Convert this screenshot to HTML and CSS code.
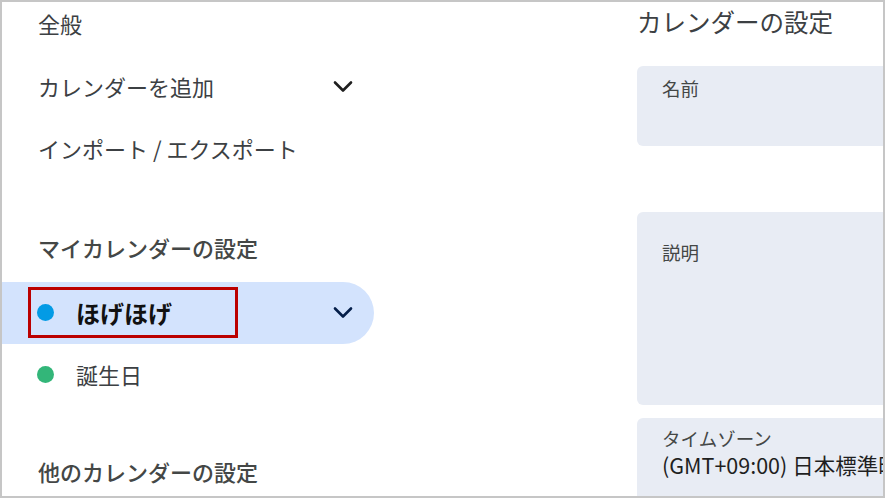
FILE: index.html
```html
<!DOCTYPE html>
<html lang="ja">

<head>
    <meta charset="UTF-8">
    <meta name="viewport" content="width=device-width, initial-scale=1.0">
    <title>設定</title>
    <link rel="stylesheet" href="styles.css">
</head>

<body>
    <div class="frame">
        <nav class="side-nav">
            <div class="nav-item nav-top">全般</div>
            <div class="nav-item nav-first">
                <span>カレンダーを追加</span>
                <svg class="chevron" viewBox="0 0 24 24"><path d="M4 8.5l8 8 8-8" /></svg>
            </div>
            <div class="nav-item">インポート / エクスポート</div>

            <div class="nav-item nav-heading">マイカレンダーの設定</div>
            <div class="nav-item cal-row cal-active">
                <span class="dot dot-blue"></span>
                <span class="cal-name">ほげほげ</span>
                <svg class="chevron" viewBox="0 0 24 24"><path d="M4 8.5l8 8 8-8" /></svg>
                <div class="mark-box"></div>
            </div>
            <div class="nav-item cal-row">
                <span class="dot dot-green"></span>
                <span class="cal-name">誕生日</span>
            </div>

            <div class="nav-item nav-heading nav-heading-2">他のカレンダーの設定</div>
        </nav>

        <main class="panel">
            <h2 class="panel-title">カレンダーの設定</h2>
            <div class="field field-name">
                <div class="field-label">名前</div>
            </div>
            <div class="field field-desc">
                <div class="field-label">説明</div>
            </div>
            <div class="field field-tz">
                <div class="field-label">タイムゾーン</div>
                <div class="field-value">(GMT+09:00) 日本標準時</div>
            </div>
        </main>
    </div>
</body>

</html>
```

FILE: styles.css
```css
* {
    box-sizing: border-box;
}

body {
    margin: 0;
    background-color: white;
    font-family: "Noto Sans CJK JP", "Noto Sans", sans-serif;
    color: #3c4043;
}

.frame {
    width: 885px;
    height: 498px;
    border: 2px solid #c6c6c6;
    display: flex;
    overflow: hidden;
}

.side-nav {
    width: 372px;
    flex-shrink: 0;
}

.nav-item {
    height: 62px;
    display: flex;
    align-items: center;
    padding-left: 36px;
    padding-right: 19px;
    padding-bottom: 4px;
    font-size: 22px;
    white-space: nowrap;
}

.nav-top {
    height: 46px;
}

.nav-first {
    margin-top: 9px;
}

.chevron {
    width: 24px;
    height: 24px;
    margin-left: auto;
    fill: none;
    stroke: #1f1f1f;
    stroke-width: 2.6;
    stroke-linecap: round;
    stroke-linejoin: round;
}

.nav-heading {
    margin-top: 37px;
    font-weight: 500;
    color: #444746;
}

.nav-heading-2 {
    margin-top: 35px;
}

.cal-row {
    padding-left: 35px;
    position: relative;
}

.cal-active {
    margin-top: 2px;
    background-color: #d3e3fd;
    border-radius: 0 31px 31px 0;
    padding-bottom: 2px;
}

.cal-active .cal-name {
    font-size: 24px;
    font-weight: 700;
    color: #111;
}

.cal-active .chevron {
    stroke: #041e49;
}

.cal-row+.cal-row {
    margin-top: 1px;
}

.dot {
    width: 17px;
    height: 17px;
    border-radius: 50%;
    margin-right: 22px;
    flex-shrink: 0;
}

.dot-blue {
    background-color: #039be5;
}

.dot-green {
    background-color: #33b679;
}

.mark-box {
    position: absolute;
    left: 26px;
    top: 5px;
    width: 210px;
    height: 51px;
    border: 3px solid #bb0000;
}

.panel {
    margin-left: 263px;
    flex: 1;
    overflow: hidden;
}

.panel-title {
    margin: 0;
    height: 40px;
    line-height: 40px;
    font-size: 24.5px;
    font-weight: 400;
    color: #3c4043;
    white-space: nowrap;
}

.field {
    width: 420px;
    background-color: #e8ecf4;
    border-radius: 6px 0 0 6px;
    padding: 9px 24px 0 25px;
}

.field-label {
    font-size: 18.5px;
    line-height: 26px;
    color: #444746;
    white-space: nowrap;
}

.field-name {
    margin-top: 24px;
    height: 80px;
}

.field-desc {
    margin-top: 66px;
    height: 193px;
    padding-top: 27px;
}

.field-tz {
    margin-top: 13px;
    height: 90px;
}

.field-tz .field-label {
    line-height: 22px;
}

.field-value {
    margin-top: 4px;
    font-size: 21.5px;
    line-height: 24px;
    color: #1f1f1f;
    white-space: nowrap;
}
```
